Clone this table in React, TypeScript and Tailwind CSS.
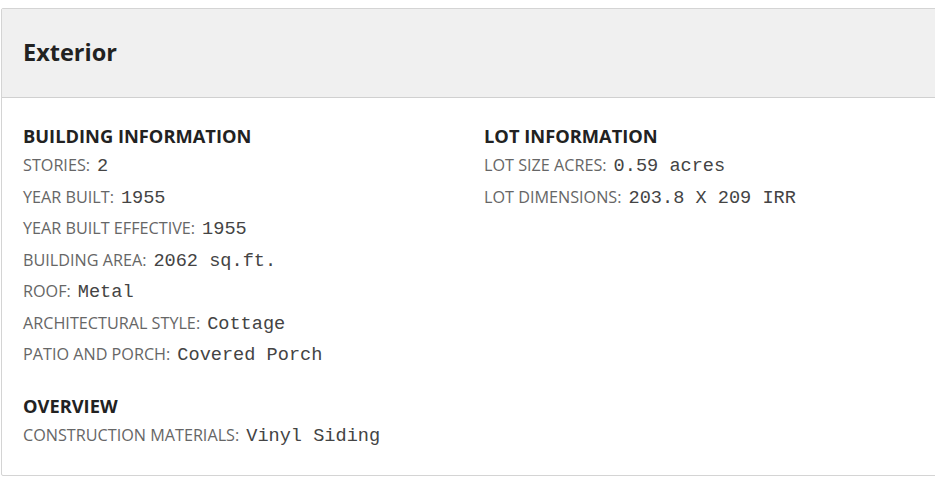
const building = [
  ['STORIES', '2'],
  ['YEAR BUILT', '1955'],
  ['YEAR BUILT EFFECTIVE', '1955'],
  ['BUILDING AREA', '2062 sq.ft.'],
  ['ROOF', 'Metal'],
  ['ARCHITECTURAL STYLE', 'Cottage'],
  ['PATIO AND PORCH', 'Covered Porch'],
]

const lot = [
  ['LOT SIZE ACRES', '0.59 acres'],
  ['LOT DIMENSIONS', '203.8 X 209 IRR'],
]

const overview = [['CONSTRUCTION MATERIALS', 'Vinyl Siding']]

function Row({ label, value }: { label: string; value: string }) {
  return (
    <div className="h-[31.5px] flex items-baseline pt-[4px] whitespace-nowrap">
      <span className="text-[16.2px] text-[#666]">{label}:</span>
      <span className="ml-[7px] text-[18.6px] text-[#444] font-['Liberation_Mono','Courier_New',monospace]">
        {value}
      </span>
    </div>
  )
}

function Section({ title, rows }: { title: string; rows: string[][] }) {
  return (
    <div>
      <h3 className="text-[18.3px] font-bold text-[#222] leading-[26px]">{title}</h3>
      {rows.map(([l, v]) => (
        <Row key={l} label={l} value={v} />
      ))}
    </div>
  )
}

export default function App() {
  return (
    <div className="w-[935px] h-[478px] overflow-hidden bg-white font-['Open_Sans',sans-serif]">
      <div className="mt-[8px] ml-[1px] w-[980px] border border-[#d4d4d4] rounded-[2px]">
        <div className="h-[89px] bg-[#f0f0f0] border-b border-[#d0d0d0] flex items-center px-[21px]">
          <h2 className="text-[23.5px] font-bold text-[#222]">Exterior</h2>
        </div>
        <div className="grid grid-cols-[461px_1fr] px-[21px] pt-[25px] pb-[25px]">
          <div>
            <Section title="BUILDING INFORMATION" rows={building} />
            <div className="mt-[23px]">
              <Section title="OVERVIEW" rows={overview} />
            </div>
          </div>
          <Section title="LOT INFORMATION" rows={lot} />
        </div>
      </div>
    </div>
  )
}
